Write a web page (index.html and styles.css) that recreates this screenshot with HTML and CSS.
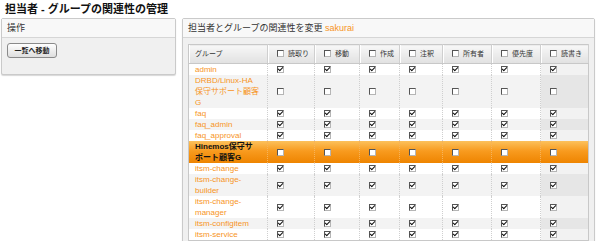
FILE: index.html
```html
<!doctype html>
<html>
	<head>
		<meta charset="UTF-8">
		<title>担当者 - グループの関連性の管理</title>
		<link rel="stylesheet" href="styles.css">
	</head>
<body>
	<h1 class="title">担当者 - グループの関連性の管理</h1>
	<div class="main">
		<div class="box side">
			<div class="box-hd">操作</div>
			<div class="box-bd">
				<button class="btn" type="button">一覧へ移動</button>
			</div>
		</div>
		<div class="box content">
			<div class="box-hd">担当者とグループの関連性を変更 <span class="user">sakurai</span></div>
			<div class="box-bd">
				<table class="perm">
					<thead>
						<tr>
							<th class="name">グループ</th>
							<th class="c1"><span class="cb"></span>読取り</th>
							<th class="c2"><span class="cb"></span>移動</th>
							<th class="c3"><span class="cb"></span>作成</th>
							<th class="c4"><span class="cb"></span>注釈</th>
							<th class="c5"><span class="cb"></span>所有者</th>
							<th class="c6"><span class="cb"></span>優先度</th>
							<th class="c7"><span class="cb"></span>読書き</th>
						</tr>
					</thead>
					<tbody>
						<tr>
							<td class="name"><a href="#">admin</a></td>
							<td><span class="cb on"></span></td><td><span class="cb on"></span></td><td><span class="cb on"></span></td><td><span class="cb on"></span></td><td><span class="cb on"></span></td><td><span class="cb on"></span></td><td class="rw"><span class="cb on"></span></td>
						</tr>
						<tr>
							<td class="name"><a href="#">DRBD/Linux-HA保守サポート顧客G</a></td>
							<td><span class="cb"></span></td><td><span class="cb"></span></td><td><span class="cb"></span></td><td><span class="cb"></span></td><td><span class="cb"></span></td><td><span class="cb"></span></td><td class="rw"><span class="cb"></span></td>
						</tr>
						<tr>
							<td class="name"><a href="#">faq</a></td>
							<td><span class="cb on"></span></td><td><span class="cb on"></span></td><td><span class="cb on"></span></td><td><span class="cb on"></span></td><td><span class="cb on"></span></td><td><span class="cb on"></span></td><td class="rw"><span class="cb on"></span></td>
						</tr>
						<tr>
							<td class="name"><a href="#">faq_admin</a></td>
							<td><span class="cb on"></span></td><td><span class="cb on"></span></td><td><span class="cb on"></span></td><td><span class="cb on"></span></td><td><span class="cb on"></span></td><td><span class="cb on"></span></td><td class="rw"><span class="cb on"></span></td>
						</tr>
						<tr>
							<td class="name"><a href="#">faq_approval</a></td>
							<td><span class="cb on"></span></td><td><span class="cb on"></span></td><td><span class="cb on"></span></td><td><span class="cb on"></span></td><td><span class="cb on"></span></td><td><span class="cb on"></span></td><td class="rw"><span class="cb on"></span></td>
						</tr>
						<tr class="hover">
							<td class="name"><a href="#">Hinemos保守サポート顧客G</a></td>
							<td><span class="cb"></span></td><td><span class="cb"></span></td><td><span class="cb"></span></td><td><span class="cb"></span></td><td><span class="cb"></span></td><td><span class="cb"></span></td><td class="rw"><span class="cb"></span></td>
						</tr>
						<tr>
							<td class="name"><a href="#">itsm-change</a></td>
							<td><span class="cb on"></span></td><td><span class="cb on"></span></td><td><span class="cb on"></span></td><td><span class="cb on"></span></td><td><span class="cb on"></span></td><td><span class="cb on"></span></td><td class="rw"><span class="cb on"></span></td>
						</tr>
						<tr>
							<td class="name"><a href="#">itsm-change-builder</a></td>
							<td><span class="cb on"></span></td><td><span class="cb on"></span></td><td><span class="cb on"></span></td><td><span class="cb on"></span></td><td><span class="cb on"></span></td><td><span class="cb on"></span></td><td class="rw"><span class="cb on"></span></td>
						</tr>
						<tr>
							<td class="name"><a href="#">itsm-change-manager</a></td>
							<td><span class="cb on"></span></td><td><span class="cb on"></span></td><td><span class="cb on"></span></td><td><span class="cb on"></span></td><td><span class="cb on"></span></td><td><span class="cb on"></span></td><td class="rw"><span class="cb on"></span></td>
						</tr>
						<tr>
							<td class="name"><a href="#">itsm-configitem</a></td>
							<td><span class="cb on"></span></td><td><span class="cb on"></span></td><td><span class="cb on"></span></td><td><span class="cb on"></span></td><td><span class="cb on"></span></td><td><span class="cb on"></span></td><td class="rw"><span class="cb on"></span></td>
						</tr>
						<tr>
							<td class="name"><a href="#">itsm-service</a></td>
							<td><span class="cb on"></span></td><td><span class="cb on"></span></td><td><span class="cb on"></span></td><td><span class="cb on"></span></td><td><span class="cb on"></span></td><td><span class="cb on"></span></td><td class="rw"><span class="cb on"></span></td>
						</tr>
					</tbody>
				</table>
			</div>
		</div>
	</div>
</body>
</html>
```

FILE: styles.css
```css
*{
	margin:0;
	padding:0;
}
html,body{
	overflow:hidden;
}
body{
	background:#fff;
	color:#222;
	font-family:"Liberation Sans","Noto Sans CJK JP",sans-serif;
}
a{
	text-decoration:none;
	color:#f7941d;
}
.title{
	padding:2px 0 0 5px;
	height:14px;
	line-height:14px;
	font-size:11px;
	font-weight:bold;
	color:#111;
}
.main{
	display:flex;
	align-items:flex-start;
	gap:6px;
	margin-top:2px;
	padding-left:1px;
}
.box{
	box-sizing:border-box;
	border:1px solid #cacaca;
	border-radius:2px;
	background:#f0f0f0;
	box-shadow:0 1px 1px #d8d8d8;
}
.side{
	width:175px;
}
.content{
	width:413px;
}
.box-hd{
	height:18px;
	padding-left:5px;
	line-height:18px;
	font-size:9px;
	color:#333;
	background:#f8f8f8;
	border-bottom:1px solid #d6d6d6;
}
.box-hd .user{
	color:#f7941d;
}
.side .box-bd{
	padding:5px 5px 16px;
}
.content .box-bd{
	padding:6px 6px 6px 5px;
}
.btn{
	display:block;
	width:50px;
	height:15px;
	border:1px solid #8a8a8a;
	border-radius:3px;
	background:linear-gradient(#ffffff,#dedede);
	font-family:"Liberation Sans","Noto Sans CJK JP",sans-serif;
	font-size:7px;
	font-weight:bold;
	color:#222;
	line-height:13px;
	cursor:pointer;
}
.perm{
	width:400px;
	table-layout:fixed;
	border-collapse:collapse;
	border:1px solid #c8c8c8;
	background:#fff;
}
.perm th,
.perm td{
	box-sizing:border-box;
}
.perm th{
	height:19px;
	padding:0 0 0 9px;
	text-align:left;
	font-size:7px;
	font-weight:normal;
	color:#333;
	line-height:18px;
	white-space:nowrap;
	overflow:hidden;
	background:linear-gradient(#f7f7f7,#e1e1e1);
	border-right:1px solid #cfcfcf;
	border-bottom:1px solid #c8c8c8;
	box-shadow:inset 1px 0 #fff;
}
.perm th.name{
	width:79px;
	padding-left:6px;
}
.perm th.c1{ width:47px; }
.perm th.c2{ width:45px; }
.perm th.c3{ width:40px; }
.perm th.c4{ width:43px; }
.perm th.c5{ width:49px; }
.perm th.c6{ width:49px; }
.perm th.c7{ width:48px; }
.perm th .cb{
	margin-right:4px;
	vertical-align:-1px;
}
.perm td{
	padding:0 0 0 9px;
	font-size:8px;
	line-height:11px;
	vertical-align:middle;
	border-left:1px dotted #cfcfcf;
}
.perm td.name{
	padding:0 8px 0 6px;
	border-left:none;
}
.perm tbody tr:nth-child(even){
	background:#f3f3f3;
}
.perm td.rw{
	background:rgba(0,0,0,.05);
}
.perm tbody tr.hover{
	background:linear-gradient(#fcc15c,#f89b1f 45%,#ee8400);
}
.perm tr.hover td{
	border-left-color:#f6b35a;
}
.perm tr.hover td.rw{
	background:none;
}
.perm tr.hover a{
	color:#111;
	font-weight:bold;
}
.cb{
	display:inline-block;
	position:relative;
	box-sizing:border-box;
	width:7px;
	height:7px;
	border:1px solid;
	border-color:#555 #b5b5b5 #b5b5b5 #555;
	background:#fff;
	vertical-align:middle;
}
.cb.on::after{
	content:"";
	position:absolute;
	left:1px;
	top:-1px;
	width:2px;
	height:4px;
	border:solid #111;
	border-width:0 1px 1px 0;
	transform:rotate(45deg);
}
```
